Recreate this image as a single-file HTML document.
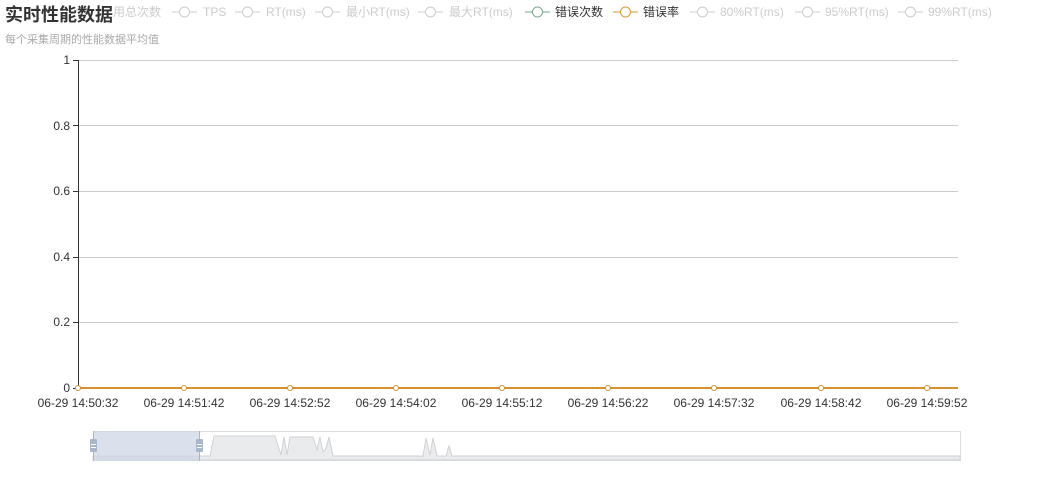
<!DOCTYPE html>
<html><head><meta charset="utf-8"><style>
html,body{margin:0;padding:0;background:#fff;width:1064px;height:481px;overflow:hidden}
svg text{font-family:"Liberation Sans","Noto Sans CJK SC",sans-serif}
</style></head><body>
<svg width="1064" height="481" xmlns="http://www.w3.org/2000/svg">
<g font-size="12" fill="#ccc">
<text x="113" y="16">用总次数</text>
<g stroke="#ccc" stroke-width="1" fill="#fff">
<line x1="172" y1="12" x2="197" y2="12"/><circle cx="184.5" cy="12" r="5"/>
<line x1="235" y1="12" x2="260" y2="12"/><circle cx="247.5" cy="12" r="5"/>
<line x1="315" y1="12" x2="340" y2="12"/><circle cx="327.5" cy="12" r="5"/>
<line x1="418" y1="12" x2="443" y2="12"/><circle cx="430.5" cy="12" r="5"/>
<line x1="690" y1="12" x2="715" y2="12"/><circle cx="702.5" cy="12" r="5"/>
<line x1="795" y1="12" x2="820" y2="12"/><circle cx="807.5" cy="12" r="5"/>
<line x1="898" y1="12" x2="923" y2="12"/><circle cx="910.5" cy="12" r="5"/>
</g>
<text x="203" y="16">TPS</text>
<text x="266" y="16">RT(ms)</text>
<text x="346" y="16">最小RT(ms)</text>
<text x="449" y="16">最大RT(ms)</text>
<text x="720" y="16">80%RT(ms)</text>
<text x="825" y="16">95%RT(ms)</text>
<text x="928" y="16">99%RT(ms)</text>
</g>
<g fill="#fff" stroke-width="1">
<line x1="525" y1="12" x2="550" y2="12" stroke="#7aa98a"/><circle cx="537.5" cy="12" r="5" stroke="#7aa98a"/>
<line x1="613" y1="12" x2="638" y2="12" stroke="#dc9a34"/><circle cx="625.5" cy="12" r="5" stroke="#dc9a34"/>
</g>
<text x="555" y="16" font-size="12" fill="#333">错误次数</text>
<text x="643" y="16" font-size="12" fill="#333">错误率</text>
<text x="5" y="21" font-size="18" font-weight="bold" fill="#333">实时性能数据</text>
<text x="5" y="43" font-size="11" fill="#aaa">每个采集周期的性能数据平均值</text>
<g stroke="#ccc" stroke-width="1">
<line x1="78" y1="60.5" x2="958" y2="60.5"/>
<line x1="78" y1="125.5" x2="958" y2="125.5"/>
<line x1="78" y1="191.5" x2="958" y2="191.5"/>
<line x1="78" y1="257.5" x2="958" y2="257.5"/>
<line x1="78" y1="322.5" x2="958" y2="322.5"/>
</g>
<line x1="78.5" y1="60" x2="78.5" y2="388" stroke="#333"/>
<g stroke="#333"><line x1="73" y1="60.5" x2="78" y2="60.5"/><line x1="73" y1="125.5" x2="78" y2="125.5"/><line x1="73" y1="191.5" x2="78" y2="191.5"/><line x1="73" y1="257.5" x2="78" y2="257.5"/><line x1="73" y1="322.5" x2="78" y2="322.5"/><line x1="73" y1="388.5" x2="78" y2="388.5"/></g>
<g font-size="12" fill="#333" text-anchor="end">
<text x="70" y="64">1</text><text x="70" y="130">0.8</text><text x="70" y="195">0.6</text>
<text x="70" y="261">0.4</text><text x="70" y="326">0.2</text><text x="70" y="392">0</text>
</g>
<line x1="78" y1="388" x2="958" y2="388" stroke="#d4922e" stroke-width="2"/>
<g fill="#fff" stroke="#d4922e" stroke-width="1">
<circle cx="78" cy="388" r="2.5"/><circle cx="184" cy="388" r="2.5"/><circle cx="290" cy="388" r="2.5"/>
<circle cx="396" cy="388" r="2.5"/><circle cx="502" cy="388" r="2.5"/><circle cx="608" cy="388" r="2.5"/>
<circle cx="714" cy="388" r="2.5"/><circle cx="821" cy="388" r="2.5"/><circle cx="927" cy="388" r="2.5"/>
</g>
<g font-size="12" fill="#333" text-anchor="middle">
<text x="78" y="407">06-29 14:50:32</text><text x="184" y="407">06-29 14:51:42</text>
<text x="290" y="407">06-29 14:52:52</text><text x="396" y="407">06-29 14:54:02</text>
<text x="502" y="407">06-29 14:55:12</text><text x="608" y="407">06-29 14:56:22</text>
<text x="714" y="407">06-29 14:57:32</text><text x="821" y="407">06-29 14:58:42</text>
<text x="927" y="407">06-29 14:59:52</text>
</g>
<rect x="93.5" y="431.5" width="867" height="29" fill="none" stroke="#ddd"/>
<path d="M93 456 L210 456 L214 436 L275 436 L281 455 L284 437 L287 455 L290 437 L313 437 L317 450 L320 437 L323 452 L326 448 L329 437 L333 456 L423 456 L426 438 L430 455 L433 438 L437 456 L446 456 L449 446 L452 456 L960 456 L960 460 L93 460 Z" fill="#eaebed" stroke="#d0d2d5" stroke-width="1"/>
<rect x="93" y="431" width="106" height="30" fill="#cdd7e6" fill-opacity="0.75"/>
<line x1="93.5" y1="431" x2="93.5" y2="461" stroke="#a7b7cc"/>
<line x1="199.5" y1="431" x2="199.5" y2="461" stroke="#a7b7cc"/>
<rect x="90" y="439" width="7" height="13" rx="1" fill="#a7b7cc"/>
<rect x="196" y="439" width="7" height="13" rx="1" fill="#a7b7cc"/>
<g stroke="#fff"><line x1="91" y1="444.5" x2="96" y2="444.5"/><line x1="91" y1="447.5" x2="96" y2="447.5"/><line x1="197" y1="444.5" x2="202" y2="444.5"/><line x1="197" y1="447.5" x2="202" y2="447.5"/></g>
</svg>
</body></html>
